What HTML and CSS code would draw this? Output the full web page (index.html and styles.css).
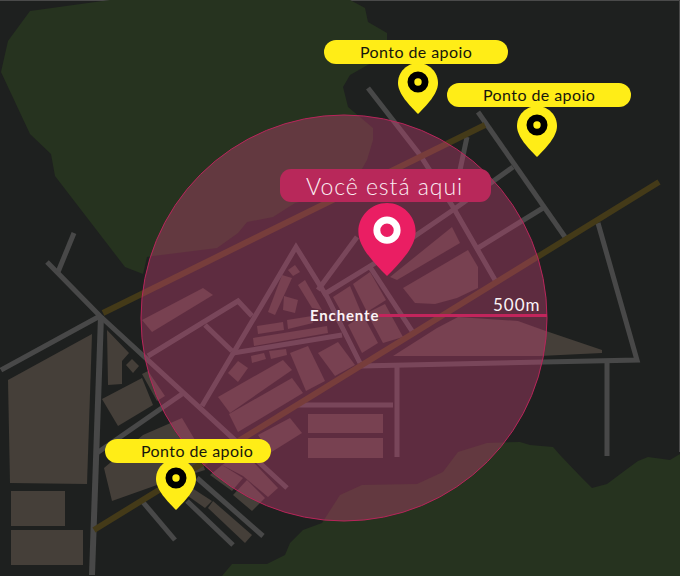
FILE: index.html
```html
<!DOCTYPE html>
<html lang="pt">
<head>
<meta charset="utf-8">
<title>Mapa</title>
<link rel="stylesheet" href="styles.css">
</head>
<body>
<main class="map">
  <svg class="terrain" viewBox="0 0 680 576" width="680" height="576" aria-hidden="true">
    <path class="edge" d="M0 .5H110M350 .5H679.5V452"/>
    <polygon class="green" points="110,0 30,11 8,41 1,72 30,134 51,154 55,176 125,267 143,274 147,257 153,256 217,248 238,233 247,222 273,217 295,203 350,190 367,160 373,140 373,128 348,107 343,87 350,75 373,62 387,52 387,33 368,22 365,8 350,0"/>
    <polygon class="green" points="222,576 232,564 267,564 285,555 290,543 303,530 322,523 340,495 362,485 417,484 443,472 458,452 487,443 520,442 530,445 553,447 560,455 580,476 592,488 607,484 623,472 638,461 648,457 670,460 680,454 680,576"/>

    <g class="building">
      <polygon points="8,380 92,334 87,484 10,483"/>
      <polygon points="11,491 65,491 65,526 11,526"/>
      <polygon points="11,530 83,530 83,565 11,565"/>
      <polygon points="107,330 129,353 122,361 122,384 108,385"/>
      <polygon points="132,359 139,366 133,373 126,365"/>
      <polygon points="102,399 142,378 153,405 118,426"/>
      <polygon points="142,374 148,371 165,396 157,401"/>
      <polygon points="104,468 143,435 182,418 195,440 205,470 157,485 112,501"/>
      <polygon points="192,488 212,501 205,508 188,496"/>
      <polygon points="213,501 252,535 245,543 208,508"/>
      <polygon points="210,475 222,465 243,478 232,491"/>
      <polygon points="233,495 247,480 265,498 252,511"/>
      <polygon points="222,465 243,451 278,488 268,497 243,476"/>
      <polygon points="258,435 290,418 302,433 270,453"/>
      <polygon points="308,414 383,414 383,433 308,433"/>
      <polygon points="308,438 383,438 383,458 308,458"/>
      <polygon points="218,397 283,360 292,370 230,413"/>
      <polygon points="229,414 292,378 303,393 238,432"/>
      <polygon points="290,353 308,346 325,381 306,391"/>
      <polygon points="318,353 338,342 355,365 335,376"/>
      <polygon points="228,373 238,361 248,368 238,382"/>
      <polygon points="251,356 264,353 266,359 252,363"/>
      <polygon points="269,351 286,349 287,355 271,359"/>
      <polygon points="253,338 327,326 328,333 254,346"/>
      <polygon points="257,326 283,322 284,330 258,334"/>
      <polygon points="287,320 312,316 313,323 288,329"/>
      <polygon points="284,296 298,300 295,313 283,310"/>
      <polygon points="282,275 292,278 275,315 268,312"/>
      <polygon points="288,270 295,265 300,272 293,276"/>
      <polygon points="298,285 305,280 322,310 312,308"/>
      <polygon points="142,320 203,288 213,295 152,332"/>
      <polygon points="390,277 452,227 460,243 397,280"/>
      <polygon points="403,288 468,250 478,267 478,288 457,298 435,304 415,303"/>
      <polygon points="393,356 437,328 458,317 518,321 543,330 602,350 602,353 540,356"/>
      <polygon points="333,297 350,286 363,317 347,322"/>
      <polygon points="353,284 370,272 386,300 367,312"/>
      <polygon points="348,325 363,315 378,343 362,353"/>
      <polygon points="367,313 385,304 403,337 383,343"/>
    </g>

    <g class="road">
      <path d="M47 262L100 316L287 488"/>
      <path d="M74 233L58 272"/>
      <path d="M1 370L100 316"/>
      <path class="wide" d="M101 316L92 575"/>
      <path d="M97 453L182 394"/>
      <path d="M148 356L238 301L252 316"/>
      <path d="M205 325L232 351"/>
      <path d="M202 406L296 247L327 297L360 363"/>
      <path d="M233 353L342 335"/>
      <path d="M318 290L357 237"/>
      <path d="M323 295L377 262L453 210L513 167"/>
      <path d="M478 248L543 208"/>
      <path d="M368 88L420 155L453 207L495 280"/>
      <path d="M370 267L412 331"/>
      <path d="M478 112L565 237"/>
      <path d="M598 223L637 360L360 366"/>
      <path d="M607 361V456"/>
      <path d="M397 366V457"/>
      <path d="M297 405H393"/>
      <path d="M467 137L460 170"/>
      <path d="M142 501L175 540"/>
      <path d="M187 501L233 545"/>
      <path d="M197 478L263 536"/>
    </g>

    <g class="highway">
      <path d="M103 313L485 125"/>
      <path d="M659 182L94 530"/>
    </g>

    <circle class="zone" cx="344" cy="318" r="203"/>
    <rect class="radius" x="379" y="314" width="168" height="3"/>
  </svg>

  <div class="label label-you">Você está aqui</div>
  <svg class="pin pin-you" viewBox="0 0 40 51" aria-hidden="true">
    <path class="pin-red" d="M20 0C31 0 40 9 40 20C40 31 28 43 20 51C12 43 0 31 0 20C0 9 9 0 20 0Z"/>
    <circle class="ring-white" cx="20" cy="19" r="7.1"/>
  </svg>

  <svg class="pin pin-a" viewBox="0 0 40 51" aria-hidden="true">
    <path class="pin-yellow" d="M20 0C31 0 40 9 40 20C40 31 28 43 20 51C12 43 0 31 0 20C0 9 9 0 20 0Z"/>
    <circle class="ring-black" cx="20" cy="19" r="7.1"/>
  </svg>
  <svg class="pin pin-b" viewBox="0 0 40 51" aria-hidden="true">
    <path class="pin-yellow" d="M20 0C31 0 40 9 40 20C40 31 28 43 20 51C12 43 0 31 0 20C0 9 9 0 20 0Z"/>
    <circle class="ring-black" cx="20" cy="19" r="7.1"/>
  </svg>
  <svg class="pin pin-c" viewBox="0 0 40 51" aria-hidden="true">
    <path class="pin-yellow" d="M20 0C31 0 40 9 40 20C40 31 28 43 20 51C12 43 0 31 0 20C0 9 9 0 20 0Z"/>
    <circle class="ring-black" cx="20" cy="19" r="7.1"/>
  </svg>

  <div class="label label-help label-a">Ponto de apoio</div>
  <div class="label label-help label-b">Ponto de apoio</div>
  <div class="label label-help label-c">Ponto de apoio</div>

  <span class="caption caption-place">Enchente</span>
  <span class="caption caption-distance">500m</span>
</main>
</body>
</html>
```

FILE: styles.css
```css
* { box-sizing: border-box; }

html, body {
  margin: 0;
  padding: 0;
  background: #1e201f;
}

.map {
  position: relative;
  width: 680px;
  height: 576px;
  overflow: hidden;
  background: #1e201f;
  font-family: "Lato", "Liberation Sans", sans-serif;
}

.terrain { display: block; }

.edge { fill: none; stroke: #4a4a4a; stroke-width: 1; }
.green { fill: #26331f; }
.building polygon { fill: #453f39; }

.road path {
  fill: none;
  stroke: #484848;
  stroke-width: 5;
  stroke-linejoin: miter;
}
.road .wide { stroke-width: 6; }

.highway path {
  fill: none;
  stroke: #443a18;
  stroke-width: 6;
}

.zone {
  fill: rgba(216, 69, 125, 0.35);
  stroke: #b8255a;
  stroke-width: 1;
}
.radius { fill: #c2255c; }

.label {
  position: absolute;
  display: flex;
  align-items: center;
  white-space: nowrap;
}

.label-help {
  height: 24px;
  padding-bottom: 2px;
  border-radius: 12px;
  background: #ffed17;
  color: #17170c;
  font-size: 16px;
  letter-spacing: 0.42px;
}
.label-a { left: 324px; top: 40px; width: 184px; padding-left: 36px; }
.label-b { left: 447px; top: 83px; width: 184px; padding-left: 36px; }
.label-c { left: 105px; top: 439px; width: 166px; padding-left: 36px; }

.label-you {
  left: 280px;
  top: 169px;
  width: 211px;
  height: 33px;
  padding-left: 26px;
  border-radius: 11px;
  background: #b8285a;
  color: #fbeef3;
  font-size: 23px;
  font-weight: 300;
  letter-spacing: 0.95px;
}

.pin { position: absolute; display: block; }
.pin-you { left: 358px; top: 203px; width: 58px; height: 73px; }
.pin-a { left: 398px; top: 63px; width: 40px; height: 51px; }
.pin-b { left: 517px; top: 106px; width: 40px; height: 51px; }
.pin-c { left: 156px; top: 459px; width: 40px; height: 51px; }

.pin-red { fill: #ea1e63; }
.pin-yellow { fill: #ffed17; }
.ring-white { fill: #ea1e63; stroke: #fff; stroke-width: 4.8; }
.ring-black { fill: #ffed17; stroke: #000; stroke-width: 6.8; }

.caption { position: absolute; white-space: nowrap; color: #fbf3f6; }
.caption-place {
  left: 310px;
  top: 306px;
  font-size: 15px;
  line-height: 18px;
  font-weight: 700;
  letter-spacing: 0.85px;
}
.caption-distance {
  left: 493px;
  top: 295px;
  font-size: 17px;
  line-height: 20px;
  font-weight: 400;
  letter-spacing: 1px;
}
```
